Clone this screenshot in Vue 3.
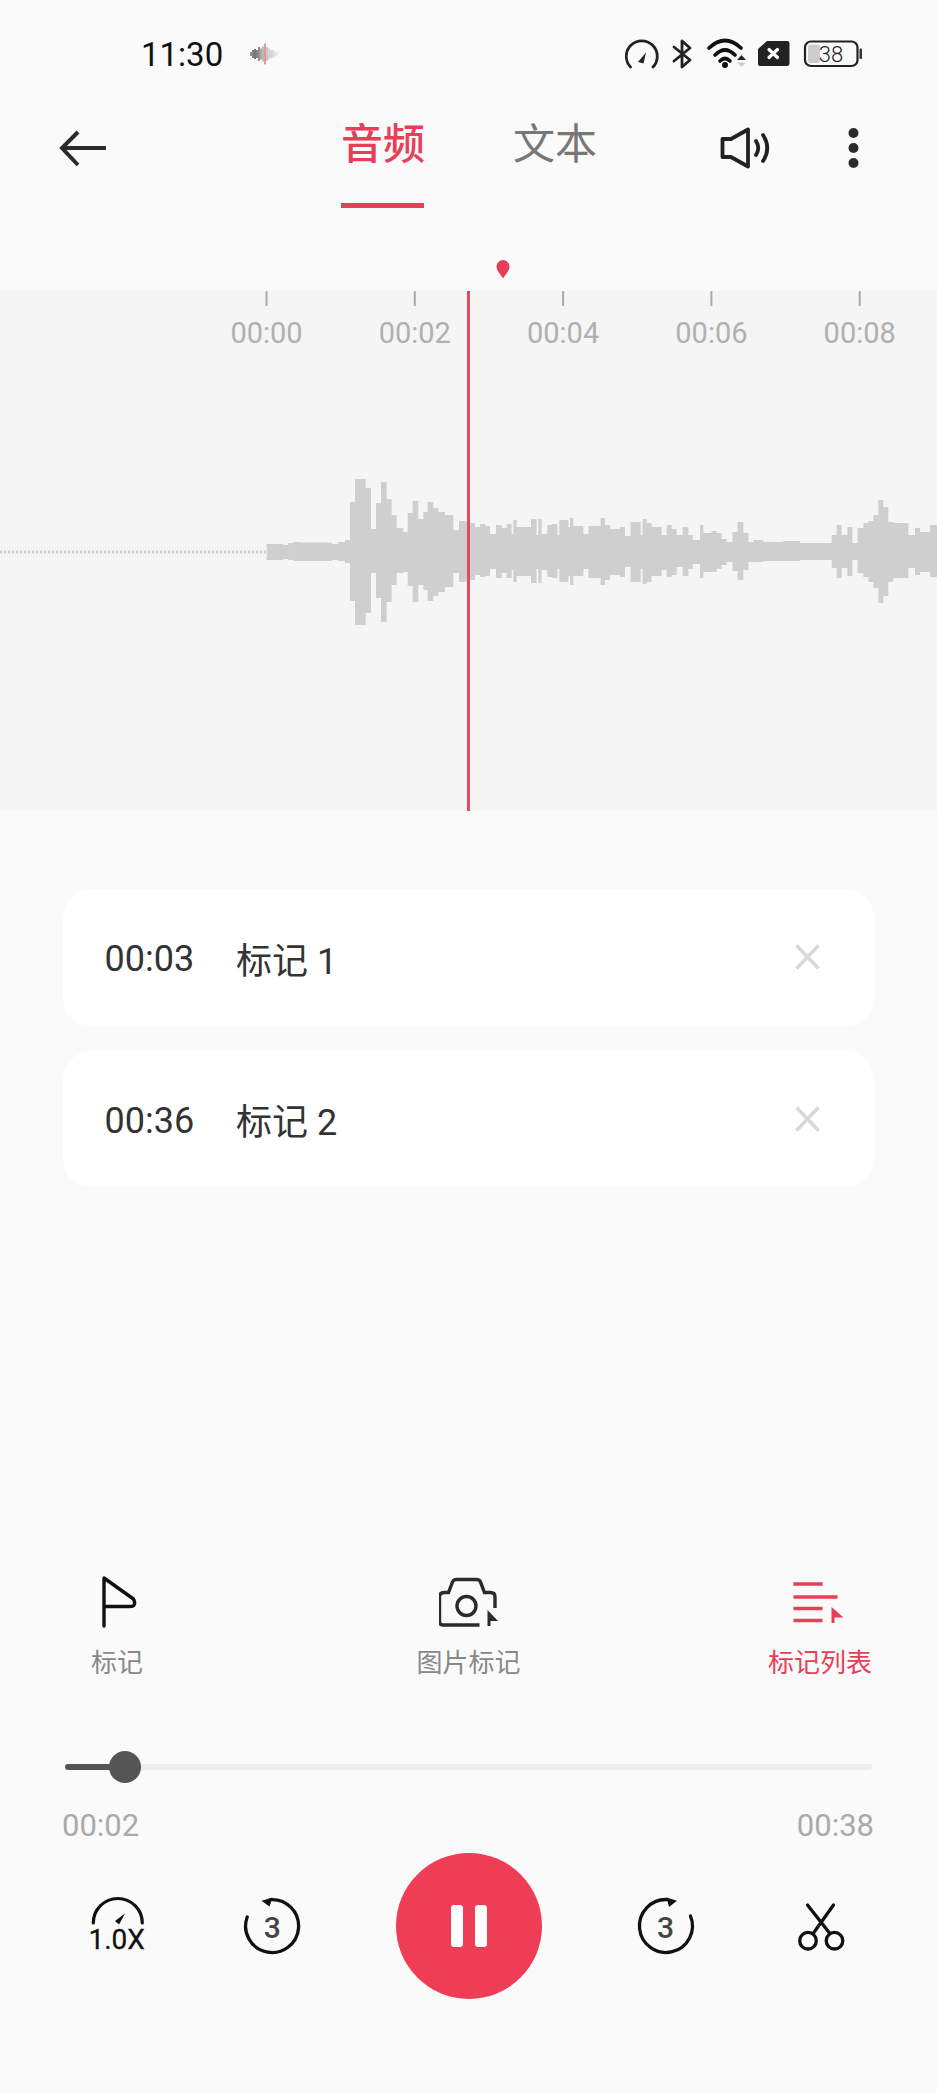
<template>
  <div class="page">
    <div class="status">
      <span class="clock">11:30</span>
      <svg class="rec-wave" viewBox="249 42 30 24">
        <line
          v-for="b in recBars"
          :key="b.x"
          :x1="b.x"
          :x2="b.x"
          :y1="54 - b.h / 2"
          :y2="54 + b.h / 2"
          :stroke="b.c"
          stroke-width="1.6"
        />
      </svg>
      <svg class="status-icons" viewBox="625 34 240 40">
        <!-- speed -->
        <path d="M630.5 67 A15.5 15.5 0 1 1 653 67" fill="none" stroke="#222" stroke-width="2.8" stroke-linecap="round" />
        <path d="M638 62 L646 52.5 L643.5 63.5 Z" fill="#222" />
        <!-- bluetooth -->
        <path d="M674 47 L690 60 L682 67 V41 L690 48 L674 61" fill="none" stroke="#222" stroke-width="2.8" stroke-linejoin="round" stroke-linecap="round" />
        <!-- wifi -->
        <g fill="none" stroke="#111" stroke-width="3.6" stroke-linecap="round">
          <path d="M709 48 Q725 33 741 48" />
          <path d="M715 55 Q725 45 735 55" />
          <path d="M720 61 Q725 56 730 61" />
        </g>
        <circle cx="725" cy="65" r="3" fill="#111" />
        <path d="M737 60 L741.5 55 L746 60 Z" fill="#222" />
        <path d="M737 62.5 L741.5 67 L746 62.5 Z" fill="#ccc" />
        <!-- sim -->
        <path d="M767 41 H787 Q789.500 41 789.500 43 V64 Q789.500 66 787 66 H760 Q758 66 758 64 V49 Z" fill="#222" />
        <path d="M769 49.500 L777.500 57.500 M777.500 49.500 L769 57.500" stroke="#fff" stroke-width="3.2" stroke-linecap="round" />
        <!-- battery -->
        <rect x="805" y="41.500" width="52.500" height="24.500" rx="6" fill="none" stroke="#222" stroke-width="2.2" />
        <rect x="808" y="44.500" width="12" height="18.500" rx="3" fill="#ccc" />
        <text x="831" y="61.500" class="batt">38</text>
        <rect x="859.500" y="48.500" width="2.500" height="10.500" rx="1" fill="#333" />
      </svg>
    </div>

    <div class="header">
      <svg class="back" viewBox="58 128 50 40">
        <path d="M78 132 L62 148 L78 165 M62 148 H106" fill="none" stroke="#2b2b2b" stroke-width="4" />
      </svg>
      <div class="tab active">音频</div>
      <div class="tab">文本</div>
      <svg class="speaker" viewBox="719 126 54 44">
        <path d="M722.500 139 H731 L748 129.500 V166.500 L731 157 H722.500 Z" fill="none" stroke="#222" stroke-width="3.800" stroke-linejoin="round" />
        <path d="M756 141 Q760.500 148 756 155 M763 135 Q771.500 148 763 161" fill="none" stroke="#222" stroke-width="3.800" stroke-linecap="round" />
      </svg>
      <svg class="more" viewBox="847 128 14 40">
        <circle cx="853.500" cy="133" r="5" fill="#2b2b2b" />
        <circle cx="853.500" cy="148" r="5" fill="#2b2b2b" />
        <circle cx="853.500" cy="163" r="5" fill="#2b2b2b" />
      </svg>
    </div>

    <div class="pin-row">
      <svg class="pin" viewBox="0 0 14 19">
        <path d="M7 18.500 C4 14 0.500 10.500 0.500 6.500 A6.500 6.500 0 0 1 13.500 6.500 C13.500 10.500 10 14 7 18.500 Z" fill="#e83f59" />
      </svg>
    </div>

    <svg class="timeline" viewBox="0 291 937 520">
      <g v-for="t in ticks" :key="t.label">
        <line :x1="t.x" :x2="t.x" y1="291" y2="306" stroke="#aaa" stroke-width="2" />
        <text :x="t.x" y="343" class="tick-label">{{ t.label }}</text>
      </g>
      <line x1="0" x2="266" y1="552" y2="552" stroke="#cfcfcf" stroke-width="3" stroke-dasharray="2 2" />
      <path :d="wavePath" fill="#cfcfcf" />
      <rect x="467" y="291" width="3" height="520" fill="#e04a62" />
    </svg>

    <div class="marks">
      <div v-for="m in marks" :key="m.time" class="mark">
        <span class="mark-time">{{ m.time }}</span>
        <span class="mark-name">{{ m.name }}</span>
        <svg class="mark-close" viewBox="0 0 25 26">
          <path d="M1.500 1.500 L23.500 24.500 M23.500 1.500 L1.500 24.500" stroke="#d8d8d8" stroke-width="3.400" fill="none" />
        </svg>
      </div>
    </div>

    <div class="tools">
      <div class="tool">
        <svg viewBox="87 1572 60 60">
          <path d="M104 1626 V1578 L133.500 1599 Q137 1606.500 130 1606.500 H104" fill="none" stroke="#111" stroke-width="3.400" stroke-linejoin="round" stroke-linecap="round" />
        </svg>
        <span>标记</span>
      </div>
      <div class="tool">
        <svg viewBox="439.500 1572 60 60">
          <path d="M480 1625 H443 Q440 1625 440 1621 V1597 Q440 1592.500 445 1592.500 H449 L453 1582 Q454 1579.500 457 1579.500 H477 Q480 1579.500 481 1582 L485 1592.500 H491 Q495.500 1592.500 495.500 1597 V1608" fill="none" stroke="#2b2b2b" stroke-width="3.400" />
          <circle cx="467" cy="1606" r="9.500" fill="none" stroke="#2b2b2b" stroke-width="3.400" />
          <path d="M488 1610 L498.500 1621 H491 V1626 H488 Z" fill="#2b2b2b" />
        </svg>
        <span>图片标记</span>
      </div>
      <div class="tool on">
        <svg viewBox="790.500 1572 60 60">
          <path d="M794 1584 H823 M794 1597 H838 M794 1608.500 H823 M794 1620.500 H823" stroke="#e83f59" stroke-width="3.600" fill="none" />
          <path d="M832 1607 L844 1617.500 H835 V1623 H832 Z" fill="#e83f59" />
        </svg>
        <span>标记列表</span>
      </div>
    </div>

    <div class="slider">
      <div class="slider-fill" :style="{ width: progress + '%' }"></div>
      <div class="slider-thumb" :style="{ left: progress + '%' }"></div>
    </div>

    <div class="times">
      <span>00:02</span>
      <span>00:38</span>
    </div>

    <div class="controls">
      <svg viewBox="83.500 1891 70 70">
        <path d="M92.800 1923 A24.500 24.500 0 0 1 141.800 1923" fill="none" stroke="#111" stroke-width="3.200" stroke-linecap="round" />
        <path d="M114.500 1921 L124.500 1913.500 L118.500 1924.500 Z" fill="#111" />
        <text x="88" y="1949" class="speed">1.0X</text>
      </svg>
      <svg viewBox="239.500 1891 70 70">
        <path d="M246.700 1917 A26.500 26.500 0 1 0 270 1899.600" fill="none" stroke="#111" stroke-width="3.300" stroke-linecap="round" />
        <path d="M261 1900.700 L272 1897.500 L269 1906.500 Z" fill="#111" />
        <text x="271.700" y="1938" class="skip">3</text>
      </svg>
      <div class="play">
        <span class="bar"></span>
        <span class="bar"></span>
      </div>
      <svg viewBox="627.500 1891 70 70">
        <path d="M690 1916 A26.500 26.500 0 1 1 666.500 1899.500" fill="none" stroke="#111" stroke-width="3.300" stroke-linecap="round" />
        <path d="M676.500 1900.700 L666 1897.500 L668.500 1907 Z" fill="#111" />
        <text x="665" y="1938" class="skip">3</text>
      </svg>
      <svg viewBox="783.500 1891 70 70">
        <g fill="none" stroke="#111" stroke-width="3.300">
          <circle cx="807.500" cy="1940.700" r="8.300" />
          <circle cx="834" cy="1940.700" r="8.300" />
          <path d="M807 1905 L829 1933 M833 1905 L813 1933" stroke-linecap="round" />
        </g>
      </svg>
    </div>
  </div>
</template>

<script setup>
import { computed, ref } from 'vue'

const progress = ref(7.4)

const marks = [
  { time: '00:03', name: '标记 1' },
  { time: '00:36', name: '标记 2' },
]

const ticks = ['00:00', '00:02', '00:04', '00:06', '00:08'].map((label, i) => ({
  label,
  x: 266.5 + i * 148.3,
}))

// small recording indicator in the status bar
const recBars = [
  [251, 4, '#777'], [253, 8, '#666'], [255, 10, '#555'], [257, 8, '#666'],
  [259, 14, '#777'], [261, 11, '#999'], [263, 15, '#aaa'], [265, 21, '#e87a8a'],
  [267, 14, '#bbb'], [269, 11, '#ccc'], [271, 8, '#ccc'], [273, 8, '#d4d4d4'],
  [275, 5, '#ddd'], [277, 3, '#e4e4e4'],
].map(([x, h, c]) => ({ x, h, c }))

// envelope of the recording, measured off 3x crops: [start, up, down]
const waveRuns = [
  { origin: 255, end: 645, segs: [
    [35, 8, 8], [85, 7, 7], [100, 9, 8], [115, 10, 9], [135, 9.5, 9], [230, 8, 8], [250, 10, 9], [270, 12, 11],
    [285, 50, 49], [300, 73, 73], [332, 64, 61], [348, 23, 21], [363, 49, 46], [378, 70, 70], [395, 53, 50],
    [410, 37, 33], [425, 24, 21], [445, 20, 20], [458, 39, 34], [473, 51, 50], [490, 33, 33], [505, 40, 38],
    [518, 50, 49], [535, 44, 44], [550, 40, 40], [570, 37, 35], [595, 22, 21], [612, 31, 30], [635, 30, 28],
  ] },
  { origin: 470, end: 690, segs: [
    [0, 29, 28], [15, 25, 23], [30, 28, 25], [45, 26, 24], [60, 18, 17], [78, 27, 26], [95, 24, 21], [110, 28, 26],
    [125, 18, 18], [130, 32, 30], [140, 25, 24], [183, 33, 31], [200, 17, 17], [205, 33, 31], [215, 18, 18],
    [232, 27, 25], [245, 28, 26], [262, 17, 17], [268, 32, 30], [295, 25, 24], [300, 34, 33], [310, 26, 24],
    [340, 18, 17], [355, 26, 26], [392, 34, 33], [405, 27, 28], [420, 23, 23], [450, 25, 25], [465, 16, 15],
    [482, 30, 30], [512, 17, 17], [518, 33, 32], [530, 29, 30], [545, 25, 24], [575, 17, 18], [590, 27, 25],
    [605, 23, 23], [620, 17, 15], [638, 25, 24], [655, 17, 17], [668, 12, 12],
  ] },
  { origin: 700, end: 711, segs: [
    [0, 27, 26], [10, 19, 20], [35, 21, 20], [50, 19, 17], [65, 13, 13], [80, 10, 10], [97, 20, 19], [113, 30, 28],
    [130, 19, 18], [145, 10, 10], [160, 12, 10], [190, 10, 9], [250, 11, 9], [300, 9, 8], [395, 17, 16], [410, 27, 26],
    [425, 17, 16], [442, 25, 24], [457, 9, 8], [473, 24, 21], [490, 29, 25], [505, 31, 30], [520, 37, 36], [535, 52, 51],
    [550, 45, 44], [565, 30, 30], [580, 29, 26], [625, 17, 16], [645, 24, 23], [660, 20, 20], [690, 27, 25],
  ] },
]

const wavePath = computed(() => {
  const cy = 552
  let d = ''
  for (const run of waveRuns) {
    run.segs.forEach(([start, up, down], i) => {
      const next = i + 1 < run.segs.length ? run.segs[i + 1][0] : run.end
      const x = run.origin + start / 3
      const w = (next - start) / 3
      d += `M${x} ${cy - up}h${w}v${up + down}h${-w}z`
    })
  }
  return d
})
</script>

<style scoped>
.page {
  width: 937px;
  height: 2093px;
  background: #fafafa;
  display: flex;
  flex-direction: column;
  overflow: hidden;
  font-family: Roboto, "Noto Sans CJK SC", sans-serif;
}
svg {
  display: block;
  flex: none;
}
.status {
  height: 108px;
  padding: 0 72px 0 141px;
  box-sizing: border-box;
  display: flex;
  align-items: center;
}
.clock {
  font-size: 33px;
  color: #111;
  width: 108px;
}
.rec-wave {
  width: 30px;
  height: 24px;
}
.status-icons {
  width: 240px;
  height: 40px;
  margin-left: auto;
}
.batt {
  font-family: Roboto, sans-serif;
  font-size: 22px;
  font-weight: 300;
  fill: #222;
  text-anchor: middle;
}
.header {
  height: 100px;
  display: flex;
  align-items: flex-start;
}
.back {
  width: 50px;
  height: 40px;
  margin: 20px 0 0 58px;
}
.tab {
  width: 83px;
  height: 100px;
  box-sizing: border-box;
  font-size: 42px;
  line-height: 74px;
  text-align: center;
  white-space: nowrap;
  color: #777;
}
.tab.active {
  margin-left: 233px;
  margin-right: 89px;
  color: #e83f59;
  font-weight: 500;
  border-bottom: 5px solid #e83f59;
}
.speaker {
  width: 54px;
  height: 44px;
  margin: 18px 0 0 123px;
}
.more {
  width: 14px;
  height: 40px;
  margin: 20px 0 0 74px;
}
.pin-row {
  height: 83px;
  padding: 52px 0 0 496px;
  box-sizing: border-box;
}
.pin {
  width: 14px;
  height: 19px;
}
.timeline {
  width: 937px;
  height: 520px;
  background: #f5f5f5;
}
.tick-label {
  font-family: Roboto, sans-serif;
  font-size: 29px;
  fill: #b0b0b0;
  text-anchor: middle;
}
.marks {
  flex: 1;
  padding: 78px 63px 0 63px;
  display: flex;
  flex-direction: column;
  gap: 25px;
}
.mark {
  height: 136.500px;
  background: #fff;
  border-radius: 28px;
  padding: 0 54px 0 41.500px;
  box-sizing: border-box;
  display: flex;
  align-items: center;
  font-size: 36px;
  color: #333;
}
.mark-time {
  width: 131.500px;
  padding-top: 4px;
}
.mark-name {
  padding-top: 1px;
}
.mark-close {
  width: 25px;
  height: 26px;
  margin-left: auto;
}
.tools {
  display: grid;
  grid-template-columns: 234px 1fr 234px;
}
.tool {
  display: flex;
  flex-direction: column;
  align-items: center;
  font-size: 26px;
  line-height: 36px;
  color: #888;
}
.tool svg {
  width: 60px;
  height: 60px;
  margin-bottom: 13px;
}
.tool.on {
  color: #e83f59;
}
.slider {
  position: relative;
  height: 6px;
  margin: 83px 65px 13px;
  background: #ededed;
  border-radius: 3px;
}
.slider-fill {
  height: 6px;
  background: #555;
  border-radius: 3px;
}
.slider-thumb {
  position: absolute;
  top: -13px;
  width: 32px;
  height: 32px;
  margin-left: -16px;
  border-radius: 50%;
  background: #555;
}
.times {
  margin-top: 23px;
  padding: 0 63px 0 62px;
  display: flex;
  justify-content: space-between;
  font-size: 31px;
  line-height: 40px;
  color: #aaa;
}
.controls {
  margin-top: 7px;
  margin-bottom: 94px;
  height: 146px;
  display: flex;
  justify-content: center;
  align-items: center;
  gap: 86px;
}
.controls svg {
  width: 70px;
  height: 70px;
}
.speed {
  font-family: Roboto, sans-serif;
  font-size: 28px;
  font-weight: 400;
  fill: #111;
  stroke: #111;
  stroke-width: 0.3px;
}
.skip {
  font-family: Roboto, sans-serif;
  font-size: 30px;
  font-weight: 500;
  fill: #444;
  text-anchor: middle;
}
.play {
  width: 146px;
  height: 146px;
  border-radius: 50%;
  background: #ee3d54;
  flex: none;
  display: flex;
  align-items: center;
  justify-content: center;
  gap: 12px;
}
.bar {
  width: 12px;
  height: 42px;
  border-radius: 3px;
  background: #fff;
}
</style>
